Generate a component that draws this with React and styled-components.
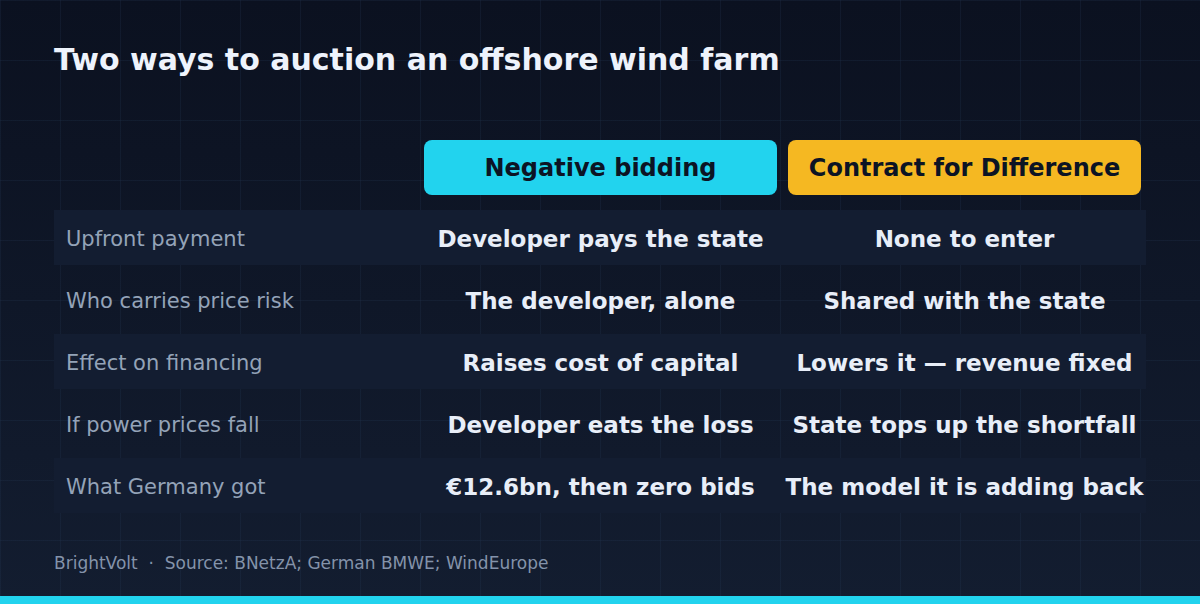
import styled, { createGlobalStyle } from "styled-components";

const GlobalStyle = createGlobalStyle`
  html, body {
    margin: 0;
    padding: 0;
    background: #0c1220;
  }
  * {
    box-sizing: border-box;
  }
`;

const rows = [
  ["Upfront payment", "Developer pays the state", "None to enter"],
  ["Who carries price risk", "The developer, alone", "Shared with the state"],
  ["Effect on financing", "Raises cost of capital", "Lowers it — revenue fixed"],
  ["If power prices fall", "Developer eats the loss", "State tops up the shortfall"],
  ["What Germany got", "€12.6bn, then zero bids", "The model it is adding back"],
];

function App() {
  return (
    <>
      <GlobalStyle />
      <Page>
        <Title>Two ways to auction an offshore wind farm</Title>

        <Table>
          <HeaderRow>
            <span />
            <Pill $color="#22d3ee">Negative bidding</Pill>
            <Pill $color="#f5b822">Contract for Difference</Pill>
          </HeaderRow>

          {rows.map(([label, a, b], i) => (
            <Row key={label} $striped={i % 2 === 0}>
              <Label>{label}</Label>
              <Value>{a}</Value>
              <Value>{b}</Value>
            </Row>
          ))}
        </Table>

        <Footer>BrightVolt &nbsp;·&nbsp; Source: BNetzA; German BMWE; WindEurope</Footer>
        <BottomBar />
      </Page>
    </>
  );
}

export default App;

const Page = styled.div`
  position: relative;
  width: 1200px;
  height: 604px;
  overflow: hidden;
  display: flex;
  flex-direction: column;
  padding: 42px 54px 0;
  font-family: "DejaVu Sans", Verdana, sans-serif;
  background-color: #0c1220;
  background-image:
    linear-gradient(rgba(40, 60, 90, 0.22) 1px, transparent 1px),
    linear-gradient(90deg, rgba(40, 60, 90, 0.22) 1px, transparent 1px),
    linear-gradient(180deg, #0b1120 0%, #131d30 100%);
  background-size: 60px 60px, 60px 60px, 100% 100%;
`;

const Title = styled.h1`
  margin: 0;
  font-size: 30px;
  font-weight: bold;
  color: #eef3fc;
  line-height: 36px;
`;

const Table = styled.div`
  margin-top: 62px;
  display: flex;
  flex-direction: column;
  gap: 7px;
`;

const HeaderRow = styled.div`
  display: grid;
  grid-template-columns: 359px 353px 353px;
  column-gap: 11px;
  padding-right: 6px;
  margin-bottom: 8px;
`;

const Pill = styled.div`
  height: 55px;
  border-radius: 8px;
  background: ${(p) => p.$color};
  color: #0c1424;
  font-size: 24px;
  font-weight: bold;
  display: flex;
  align-items: center;
  justify-content: center;
`;

const Row = styled.div`
  display: grid;
  grid-template-columns: 359px 353px 353px;
  column-gap: 11px;
  padding: 2px 6px 0 0;
  height: 55px;
  align-items: center;
  background: ${(p) => (p.$striped ? "#131d31" : "transparent")};
`;

const Label = styled.div`
  padding: 1px 0 0 12px;
  font-size: 21px;
  color: #94a3b8;
`;

const Value = styled.div`
  display: flex;
  justify-content: center;
  font-size: 23px;
  font-weight: bold;
  color: #e8eef8;
  white-space: nowrap;
`;

const Footer = styled.div`
  margin-top: 40px;
  font-size: 17px;
  color: #8493aa;
`;

const BottomBar = styled.div`
  position: absolute;
  left: 0;
  right: 0;
  bottom: 0;
  height: 8px;
  background: #22d3ee;
`;
